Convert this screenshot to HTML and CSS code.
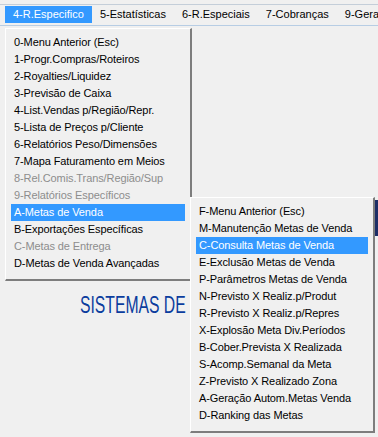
FILE: index.html
```html
<!DOCTYPE html>
<html>
    <head>
        <meta charset='utf-8'>
        <title>Sistema - R.Especifico</title>
        <link rel="stylesheet" href="styles.css">
    </head>
    <body>
        <div class='top-line'></div>
        <div class='menubar'>
            <span class='mb-item active'>4-R.Especifico</span>
            <span class='mb-item'>5-Estatísticas</span>
            <span class='mb-item'>6-R.Especiais</span>
            <span class='mb-item'>7-Cobranças</span>
            <span class='mb-item'>9-Gerais</span>
        </div>
        <div class='workspace'>
            <div class='brand'>SISTEMAS DE</div>
        </div>
        <div class='peek'></div>

        <div class='dropdown main-menu'>
            <div class='item'>0-Menu Anterior (Esc)</div>
            <div class='item'>1-Progr.Compras/Roteiros</div>
            <div class='item'>2-Royalties/Liquidez</div>
            <div class='item'>3-Previsão de Caixa</div>
            <div class='item'>4-List.Vendas p/Região/Repr.</div>
            <div class='item'>5-Lista de Preços p/Cliente</div>
            <div class='item'>6-Relatórios Peso/Dimensões</div>
            <div class='item'>7-Mapa Faturamento em Meios</div>
            <div class='item disabled'>8-Rel.Comis.Trans/Região/Sup</div>
            <div class='item disabled'>9-Relatórios Específicos</div>
            <div class='item selected'>A-Metas de Venda</div>
            <div class='item'>B-Exportações Específicas</div>
            <div class='item disabled'>C-Metas de Entrega</div>
            <div class='item'>D-Metas de Venda Avançadas</div>
        </div>

        <div class='dropdown sub-menu'>
            <div class='item'>F-Menu Anterior (Esc)</div>
            <div class='item'>M-Manutenção Metas de Venda</div>
            <div class='item selected'>C-Consulta Metas de Venda</div>
            <div class='item'>E-Exclusão Metas de Venda</div>
            <div class='item'>P-Parâmetros Metas de Venda</div>
            <div class='item'>N-Previsto X Realiz.p/Produt</div>
            <div class='item'>R-Previsto X Realiz.p/Repres</div>
            <div class='item'>X-Explosão Meta Div.Períodos</div>
            <div class='item'>B-Cober.Prevista X Realizada</div>
            <div class='item'>S-Acomp.Semanal da Meta</div>
            <div class='item'>Z-Previsto X Realizado Zona</div>
            <div class='item'>A-Geração Autom.Metas Venda</div>
            <div class='item'>D-Ranking das Metas</div>
        </div>
    </body>
</html>
```

FILE: styles.css
```css
*{
    box-sizing: border-box;
}
body{
    margin: 0;
    width: 378px;
    height: 437px;
    overflow: hidden;
    position: relative;
    background-color: #f0f0f0;
    font-family: "Liberation Sans", Arial, sans-serif;
    font-size: 11px;
    color: #000;
}

.top-line{
    height: 5px;
    border-bottom: 1px solid #c4ced9;
}

.menubar{
    display: flex;
    height: 21px;
    padding: 1px 0 0 5px;
    border-bottom: 1px solid #b7cde4;
}

.mb-item{
    height: 17px;
    line-height: 17px;
    padding: 0 8px;
    white-space: nowrap;
}

.mb-item.active{
    background-color: #3399ff;
    color: #fff;
}

.workspace{
    padding: 267px 0 0 80px;
}

.brand{
    font-size: 24px;
    line-height: 24px;
    color: #0b3d9e;
    white-space: nowrap;
    transform: scaleX(0.655);
    transform-origin: left top;
}

.peek{
    position: absolute;
    right: 0;
    top: 200px;
    width: 3px;
    height: 36px;
    background-color: #1d2e66;
}

.dropdown{
    position: absolute;
    display: flex;
    flex-direction: column;
    background-color: #f0f0f0;
    border-left: 1px solid #fff;
    border-top: 1px solid #fff;
    border-right: 2px solid #7d7d7d;
    border-bottom: 2px solid #7d7d7d;
    padding: 5px 5px 7px 5px;
}

.main-menu{
    left: 5px;
    top: 28px;
    width: 187px;
}

.sub-menu{
    left: 190px;
    top: 197px;
    width: 185px;
}

.item{
    height: 17px;
    line-height: 17px;
    padding-left: 3px;
    white-space: nowrap;
    letter-spacing: -0.1px;
}

.item.disabled{
    color: #8d8d8d;
}

.item.selected{
    background-color: #3399ff;
    color: #fff;
}
```
